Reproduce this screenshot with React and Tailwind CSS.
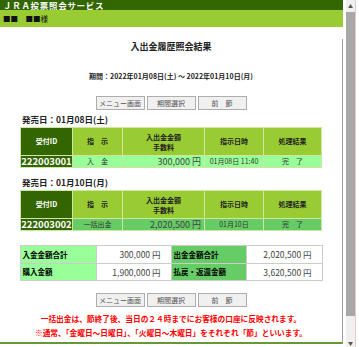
import React from 'react';

const jp = "font-['Noto_Sans_CJK_JP',sans-serif]";

const NavButtons = () => (
    <div className="flex justify-center gap-[2px]">
        {['メニュー画面', '期間選択', '前　節'].map((label) => (
            <button key={label} className="w-[49px] h-[14px] bg-[#f0f0f0] border border-[#adadad] text-[7px] leading-[12px] text-[#555]">
                {label}
            </button>
        ))}
    </div>
);

const HistoryTable = ({ id, kind, amount, time, rowBg }) => (
    <table className="mx-auto border-collapse text-[7px]">
        <colgroup>
            <col className="w-[52px]" />
            <col className="w-[50px]" />
            <col className="w-[82px]" />
            <col className="w-[59px]" />
            <col className="w-[58px]" />
        </colgroup>
        <thead>
            <tr className="h-[28px] font-bold text-[#222]">
                <th className="bg-[#336600] text-white border border-[#cfe6a3]">受付ID</th>
                <th className="bg-[#99cc33] border border-[#cfe6a3]">指　示</th>
                <th className="bg-[#99cc33] border border-[#cfe6a3] leading-[10px]">入出金金額<br />手数料</th>
                <th className="bg-[#99cc33] border border-[#cfe6a3]">指示日時</th>
                <th className="bg-[#99cc33] border border-[#cfe6a3]">処理結果</th>
            </tr>
        </thead>
        <tbody>
            <tr className={`h-[12px] ${rowBg} text-[#333]`}>
                <td className="bg-[#336600] text-white font-bold text-[9.5px] leading-[11px] text-center border border-[#cfe6a3]">{id}</td>
                <td className="text-center border border-[#cfe6a3]">{kind}</td>
                <td className="text-right pr-[3px] text-[9px] leading-[11px] text-[#444] border border-[#cfe6a3]">{amount}</td>
                <td className="text-center border border-[#cfe6a3]">{time}</td>
                <td className="text-center border border-[#cfe6a3]">完　了</td>
            </tr>
        </tbody>
    </table>
);

const App = () => {
    return (
        <div className={`w-[359px] h-[347px] flex bg-white overflow-hidden ${jp}`}>
            <div className="w-[343px] flex flex-col">
                <div className="h-[10px] bg-[#336600] text-white font-bold text-[8.5px] leading-[10px] pl-[3px] tracking-[0.7px] overflow-hidden">ＪＲＡ投票照会サービス</div>
                <div className="h-[17px] bg-[#99cc33] text-[7.5px] leading-[17px] pl-[3px] text-[#111]">■■　■■様</div>

                <div className="mt-[12px] h-[305px] border-r border-[#a0a0a0] border-b-2 border-b-[#669933] flex flex-col">
                    <h1 className="pt-[2px] text-center font-bold text-[9px] leading-[12px] text-[#222]">入出金履歴照会結果</h1>
                    <p className="mt-[18px] text-center font-bold text-[7px] leading-[10px] text-[#222]">期間：2022年01月08日(土) ～ 2022年01月10日(月)</p>

                    <div className="mt-[15px]"><NavButtons /></div>

                    <p className="mt-[3px] ml-[22px] font-bold text-[8.5px] leading-[12px] text-[#222]">発売日：01月08日(土)</p>
                    <div className="mt-[2px]">
                        <HistoryTable id="222003001" kind="入　金" amount="300,000 円" time="01月08日 11:40" rowBg="bg-[#99ff99]" />
                    </div>

                    <p className="mt-[8px] ml-[22px] font-bold text-[8.5px] leading-[12px] text-[#222]">発売日：01月10日(月)</p>
                    <div className="mt-[2px]">
                        <HistoryTable id="222003002" kind="一括出金" amount="2,020,500 円" time="01月10日" rowBg="bg-[#66cc66]" />
                    </div>

                    <table className="mx-auto mt-[14px] border-collapse text-[7.5px]">
                        <colgroup>
                            <col className="w-[76px]" />
                            <col className="w-[75px]" />
                            <col className="w-[75px]" />
                            <col className="w-[76px]" />
                        </colgroup>
                        <tbody>
                            <tr className="h-[18px]">
                                <td className="bg-[#99ff99] font-bold pl-[2px] border border-[#cccccc]">入金金額合計</td>
                                <td className="text-right pr-[10px] text-[8.5px] text-[#444] border border-[#cccccc]">300,000 円</td>
                                <td className="bg-[#66cc66] font-bold pl-[2px] border border-[#cccccc]">出金金額合計</td>
                                <td className="text-right pr-[10px] text-[8.5px] text-[#444] border border-[#cccccc]">2,020,500 円</td>
                            </tr>
                            <tr className="h-[17px]">
                                <td className="bg-[#99ff99] font-bold pl-[2px] border border-[#cccccc]">購入金額</td>
                                <td className="text-right pr-[10px] text-[8.5px] text-[#444] border border-[#cccccc]">1,900,000 円</td>
                                <td className="bg-[#66cc66] font-bold pl-[2px] border border-[#cccccc]">払戻・返還金額</td>
                                <td className="text-right pr-[10px] text-[8.5px] text-[#444] border border-[#cccccc]">3,620,500 円</td>
                            </tr>
                        </tbody>
                    </table>

                    <div className="mt-[12px]"><NavButtons /></div>

                    <div className="mt-[5px] text-center text-[#ff0000] font-bold text-[7.7px] leading-[14px]">
                        <p>一括出金は、節終了後、当日の２４時までにお客様の口座に反映されます。</p>
                        <p>※通常、「金曜日～日曜日」、「火曜日～木曜日」をそれぞれ「節」といいます。</p>
                    </div>
                </div>
            </div>

            {/* browser scrollbar */}
            <div className="ml-[3px] w-[9px] h-full flex flex-col bg-[#f0f0f0]">
                <div className="h-[12px] flex items-center justify-center text-[5px] text-[#555]">▲</div>
                <div className="h-[304px] bg-[#a8a8a8]" />
                <div className="flex-1" />
                <div className="h-[8px] flex items-center justify-center text-[5px] text-[#555]">▼</div>
            </div>
            <div className="w-px h-full bg-[#e8c8c8]" />
        </div>
    );
};

export default App;
